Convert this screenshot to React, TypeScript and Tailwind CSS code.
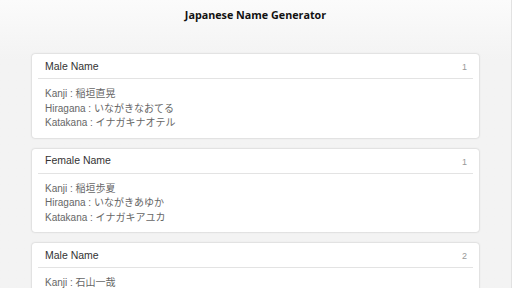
const names = [
  { type: 'Male Name', n: 1, kanji: '稲垣直晃', hira: 'いながきなおてる', kata: 'イナガキナオテル' },
  { type: 'Female Name', n: 1, kanji: '稲垣歩夏', hira: 'いながきあゆか', kata: 'イナガキアユカ' },
  { type: 'Male Name', n: 2, kanji: '石山一哉', hira: 'いしやまかずや', kata: 'イシヤマカズヤ' },
];

function NameCard({ type, n, kanji, hira, kata }: (typeof names)[number]) {
  return (
    <div className="rounded-[3px] bg-white shadow-[0_0_2px_rgba(0,0,0,0.25)]">
      <div className="mx-[6px] flex h-[25px] items-center justify-between border-b border-[#e3e3e3] pl-[7px] pr-[6px]">
        <span className="pt-[1px] text-[10.5px] text-[#333]">{type}</span>
        <span className="pt-[4px] text-[9px] text-[#999]">{n}</span>
      </div>
      <div className="px-[13px] pb-[7px] pt-[8px] text-[10px] leading-[14.5px] text-[#666]">
        <div>Kanji : {kanji}</div>
        <div>Hiragana : {hira}</div>
        <div>Katakana : {kata}</div>
      </div>
    </div>
  );
}

export default function App() {
  return (
    <div
      className="h-[288px] overflow-hidden border-r border-[#e2e2e2] bg-gradient-to-b from-[#fbfbfb] to-[#f3f3f3] to-[60px]"
      style={{ fontFamily: '"Liberation Sans", Arial, "Noto Sans CJK JP", sans-serif' }}
    >
      <div
        className="flex h-[30px] items-center justify-center text-[10.75px] font-bold text-[#111]"
        style={{ fontFamily: '"Open Sans", "Liberation Sans", sans-serif' }}
      >
        Japanese Name Generator
      </div>
      <div className="mx-[32px] mt-[24px] flex flex-col gap-[11px]">
        {names.map((x, i) => (
          <NameCard key={i} {...x} />
        ))}
      </div>
    </div>
  );
}
